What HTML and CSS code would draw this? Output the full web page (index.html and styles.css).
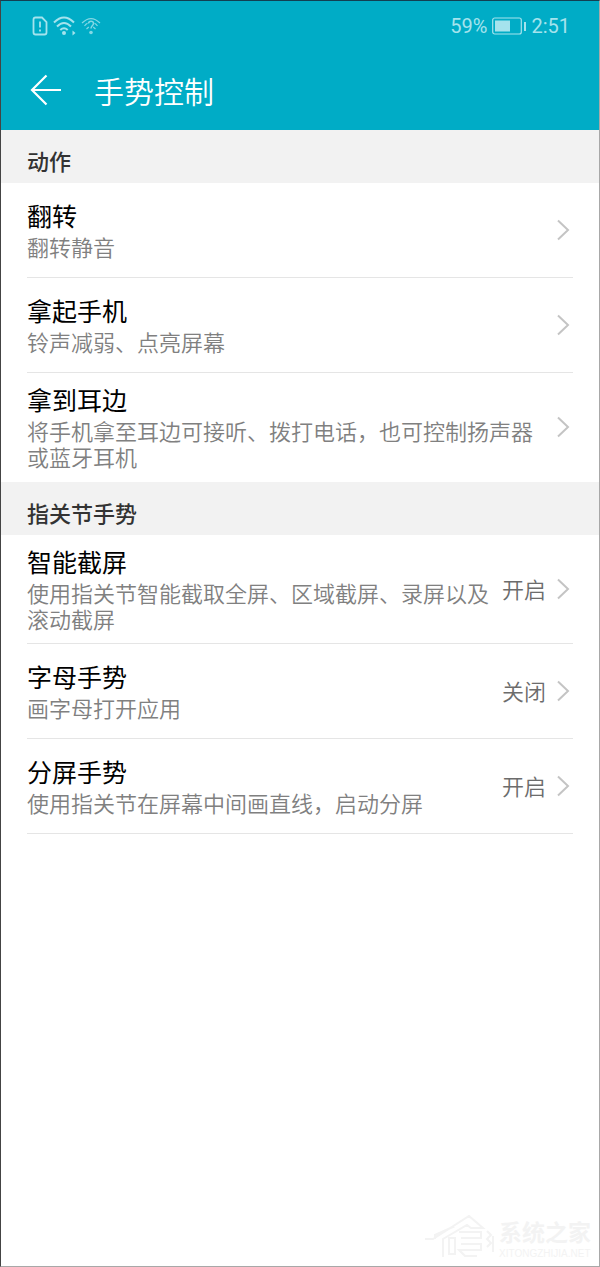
FILE: index.html
```
<!DOCTYPE html>
<html lang="zh-CN">
<head>
<meta charset="utf-8">
<meta name="viewport" content="width=device-width, initial-scale=1">
<title>手势控制</title>
<link rel="stylesheet" href="styles.css">
</head>
<body>
<svg class="defs" aria-hidden="true"><symbol id="chevron" viewBox="0 0 14 24"><path d="M2 2.500 12 12 2 21.500" fill="none" stroke="#c4c4c4" stroke-width="2"/></symbol></svg>
<div class="screen">
  <header class="header">
    <div class="status">
      <div class="status-group">
        <svg width="16" height="20" viewBox="0 0 16 20" fill="none" stroke="currentColor" stroke-width="1.8"><path d="M3.500 1.500H10L14.500 6V16.500Q14.500 18.500 12.500 18.500H3.500Q1.500 18.500 1.500 16.500V3.500Q1.500 1.500 3.500 1.500Z"/><path d="M8 5.500V11.500M8 13.500V15.500"/></svg>
        <svg width="23" height="20" viewBox="0 0 23 20" fill="none" stroke="currentColor" stroke-width="2"><path d="M1 6.500Q11 -3.500 21 6.500M4 10.500Q11 3.500 18 10.500M7.300 14Q11 10.500 14.700 14"/><circle cx="11" cy="17" r="2" fill="currentColor" stroke="none"/><path d="M19.500 14.500V19.500L22.500 17Z" fill="currentColor" stroke="none"/></svg>
        <svg width="20" height="20" viewBox="0 0 20 20" fill="none" stroke="currentColor" stroke-width="1.200" opacity=".8"><path d="M1 7Q10 -2 19 7M3.500 10Q5 8 6.500 7.300M16.500 10Q15 8 13.500 7.300M5.500 13L7.800 11M14.500 13L12.200 11"/><path d="M7.500 7.500Q7.800 5.300 10 5.300 12.500 5.300 12.500 7.500C12.500 9.500 10 9.500 10 12.500" stroke-width="1.500"/><circle cx="10" cy="16.500" r="1.800" fill="currentColor" stroke="none"/></svg>
      </div>
      <div class="status-group">
        <span>59%</span>
        <svg width="34" height="18" viewBox="0 0 34 18"><rect x=".7" y="1" width="28.600" height="16" rx="2" fill="none" stroke="currentColor" stroke-width="1.200"/><path d="M3 3.500H18V14.500H3ZM32 5H34V14H32Z" fill="currentColor"/></svg>
        <span>2:51</span>
      </div>
    </div>
    <div class="titlebar">
      <button class="back" type="button" aria-label="返回"><svg width="32" height="32" viewBox="0 0 32 32" fill="none" stroke="currentColor" stroke-width="2.200"><path d="M16.500 1.500 2 16 16.500 30.500M2 16H31"/></svg></button>
      <h1 class="title">手势控制</h1>
    </div>
  </header>
  <main>
    <h2 class="section">动作</h2>
    <ul class="list">
      <li><a class="row" href="#"><span class="text"><span class="name">翻转</span><span class="desc">翻转静音</span></span><svg class="chevron"><use href="#chevron"/></svg></a></li>
      <li><a class="row" href="#"><span class="text"><span class="name">拿起手机</span><span class="desc">铃声减弱、点亮屏幕</span></span><svg class="chevron"><use href="#chevron"/></svg></a></li>
      <li><a class="row row-plain" href="#"><span class="text"><span class="name">拿到耳边</span><span class="desc">将手机拿至耳边可接听、拨打电话，也可控制扬声器或蓝牙耳机</span></span><svg class="chevron"><use href="#chevron"/></svg></a></li>
    </ul>
    <h2 class="section">指关节手势</h2>
    <ul class="list">
      <li><a class="row" href="#"><span class="text"><span class="name">智能截屏</span><span class="desc">使用指关节智能截取全屏、区域截屏、录屏以及滚动截屏</span></span><span class="value">开启</span><svg class="chevron"><use href="#chevron"/></svg></a></li>
      <li><a class="row" href="#"><span class="text"><span class="name">字母手势</span><span class="desc">画字母打开应用</span></span><span class="value">关闭</span><svg class="chevron"><use href="#chevron"/></svg></a></li>
      <li><a class="row" href="#"><span class="text"><span class="name">分屏手势</span><span class="desc">使用指关节在屏幕中间画直线，启动分屏</span></span><span class="value">开启</span><svg class="chevron"><use href="#chevron"/></svg></a></li>
    </ul>
  </main>
  <footer class="mark">
    <svg width="70" height="46" viewBox="0 0 70 46" fill="none" stroke="currentColor" stroke-width="2"><path d="M0 25H8L44 2 58 14H46L42 11 18 25V43M10 25V21L30 12M24 24V40H30V24ZM34 18H56V24H36M36 30H56V36H34L40 42H52M62 17l4 4-4 4 4 4-4 4M68 22v16"/></svg>
    <div class="mark-text"><span class="mark-name">系统之家</span><span class="mark-url">XITONGZHIJIA.NET</span></div>
  </footer>
</div>
</body>
</html>
```
FILE: styles.css
```
* { box-sizing: border-box; }
body {
  margin: 0;
  background: #fff;
  color: #000;
  font-family: "Noto Sans CJK SC", sans-serif;
}
h1, h2, ul { margin: 0; padding: 0; }
ul { list-style: none; }
svg { display: block; flex: none; }
.defs { position: absolute; width: 0; height: 0; }
.screen {
  display: flex;
  flex-direction: column;
  min-height: 100vh;
  border: 1px solid #a8a8a8;
  border-top-color: #123f52;
  border-left-color: #444;
}
.header { background: #00acc6; color: #fff; }
.status {
  display: flex;
  justify-content: space-between;
  align-items: center;
  height: 50px;
  padding: 0 29px 0 31px;
  color: #a5e3ed;
  font: 20px/24px Roboto, sans-serif;
}
.status-group { display: flex; align-items: center; gap: 5px; }
.titlebar { display: flex; align-items: center; gap: 32px; padding: 17px 29px 18px; }
.back { padding: 0; border: 0; background: none; color: #fff; cursor: pointer; }
.title { font-size: 30px; line-height: 44px; font-weight: 350; }
.section {
  min-height: 53px;
  padding: 13px 26px 6px;
  background: #f2f2f2;
  color: #333;
  font-size: 22px;
  line-height: 34px;
  font-weight: 500;
}
.list { padding: 0 26px; }
.row {
  display: flex;
  align-items: center;
  min-height: 95px;
  padding-right: 3px;
  border-bottom: 1px solid #e5e5e5;
  color: inherit;
  text-decoration: none;
}
.row-plain { border-bottom-color: transparent; }
.text { flex: 1; display: flex; flex-direction: column; padding: 8px 0 12px; }
.name { font-size: 25px; line-height: 36px; }
.desc { color: #808080; font-size: 22px; line-height: 26px; font-weight: 350; }
.value { margin-left: 8px; padding-bottom: 2px; color: #6c6c6c; font-size: 22px; line-height: 26px; font-weight: 350; white-space: nowrap; }
.chevron { width: 14px; height: 24px; margin-left: 10px; }
.mark {
  display: flex;
  align-items: center;
  justify-content: flex-end;
  gap: 4px;
  margin-top: auto;
  padding: 0 8px 6px;
  color: #f3f3f3;
}
.mark-text { display: flex; flex-direction: column; }
.mark-name { font-size: 23px; line-height: 34px; font-weight: 700; }
.mark-url { font: 10px/12px "Liberation Sans", sans-serif; }
```
